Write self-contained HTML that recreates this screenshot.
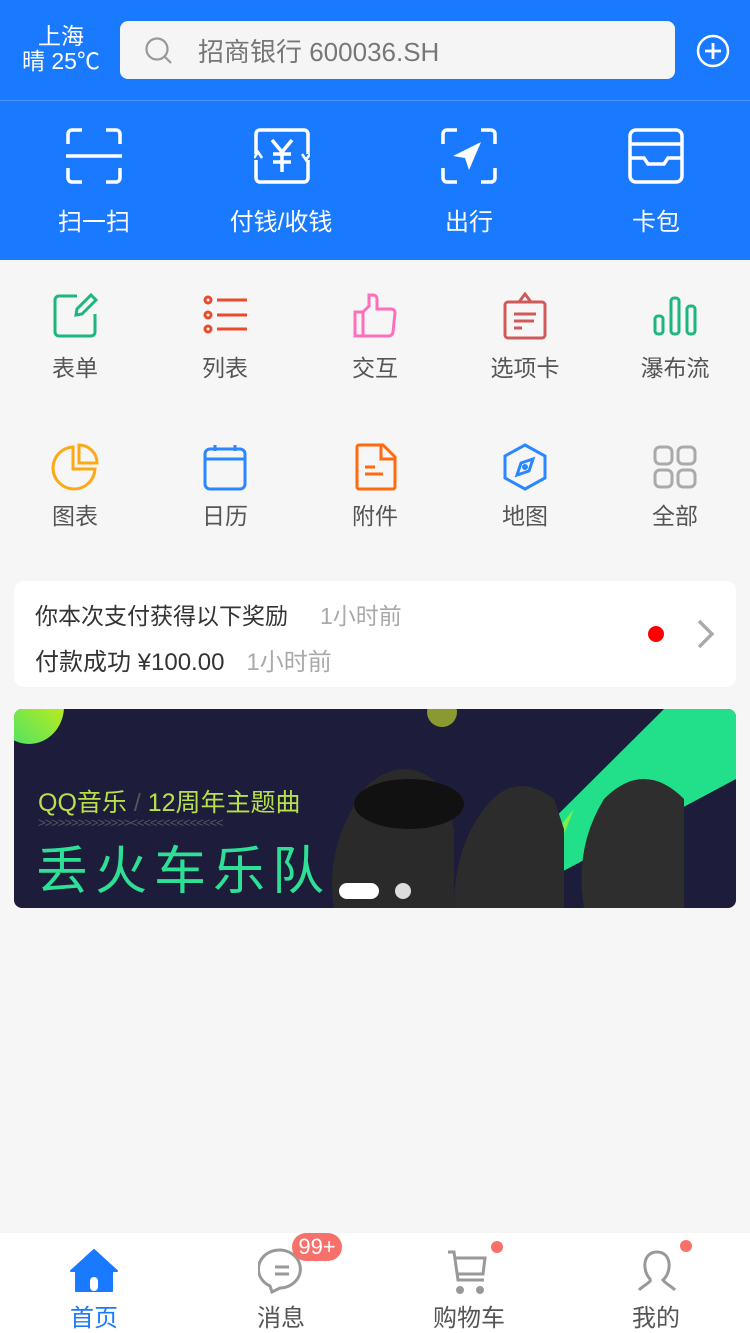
<!DOCTYPE html>
<html><head><meta charset="utf-8"><style>
*{margin:0;padding:0;box-sizing:border-box}
body{width:750px;height:1333px;background:#f6f6f6;font-family:"Liberation Sans","Noto Sans CJK SC",sans-serif;position:relative;overflow:hidden}
.hd{position:absolute;left:0;top:0;width:750px;height:260px;background:#1a7aff}
.line{position:absolute;left:0;top:100px;width:750px;height:1px;background:#4a95ff}
.city{position:absolute;left:14px;top:24px;width:94px;color:#fff;text-align:center;font-size:23px;line-height:25px}
.search{position:absolute;left:120px;top:21px;width:555px;height:58px;background:#f5f5f5;border-radius:8px}
.search span{position:absolute;left:78px;top:11px;font-size:26px;color:#777}
.qi{position:absolute;top:128px;width:56px;height:56px}
.ql{position:absolute;top:202px;color:#fff;font-size:24px;width:188px;text-align:center}
.gi{position:absolute;width:48px;height:48px}
.gl{position:absolute;width:150px;text-align:center;font-size:23px;color:#555}
.card{position:absolute;left:14px;top:581px;width:722px;height:106px;background:#fff;border-radius:10px}
.banner{position:absolute;left:14px;top:709px;width:722px;height:199px;border-radius:8px;overflow:hidden;background:#1d1d3b}
.tab{position:absolute;left:0;top:1233px;width:750px;height:100px;background:#fff}
.tl{position:absolute;top:1298px;width:188px;text-align:center;font-size:24px;color:#555}
</style></head><body>
<div class="hd"></div><div class="line"></div>
<div class="city">上海<br>晴 25℃</div>
<div class="search">
<svg style="position:absolute;left:24px;top:15px" width="30" height="30" viewBox="0 0 30 30"><circle cx="13" cy="13" r="10.5" fill="none" stroke="#999" stroke-width="2.2"/><path d="M21 21l6 6" stroke="#999" stroke-width="2.2"/></svg>
<span>招商银行 600036.SH</span></div>
<svg style="position:absolute;left:696px;top:34px" width="34" height="34" viewBox="0 0 34 34"><circle cx="17" cy="17" r="15" fill="none" stroke="#fff" stroke-width="2.5"/><path d="M17 9v16M9 17h16" stroke="#fff" stroke-width="2.8"/></svg>

<svg class="qi" style="left:66px" viewBox="0 0 56 56" fill="none" stroke="#fff" stroke-width="3.5"><path d="M2 16V6a4 4 0 0 1 4-4h10M40 2h10a4 4 0 0 1 4 4v10M54 40v10a4 4 0 0 1-4 4H40M16 54H6a4 4 0 0 1-4-4V40M0 28h56"/></svg>
<svg class="qi" style="left:254px" viewBox="0 0 56 56" fill="none" stroke="#fff" stroke-width="3.5"><path d="M2 26V6a4 4 0 0 1 4-4h44a4 4 0 0 1 4 4v20M54 32v18a4 4 0 0 1-4 4H6a4 4 0 0 1-4-4V32M18 12l10 12 10-12M28 24v20M19 26h18M19 34h18"/><path d="M0 30l4 -6 4 6M48 26l4 6 4-6" stroke-width="2.5"/></svg>
<svg class="qi" style="left:441px" viewBox="0 0 56 56" fill="none" stroke="#fff" stroke-width="3.5"><path d="M2 16V6a4 4 0 0 1 4-4h10M40 2h10a4 4 0 0 1 4 4v10M54 40v10a4 4 0 0 1-4 4H40M16 54H6a4 4 0 0 1-4-4V40"/><path d="M40 14L12 28l12 2 4 12z" fill="#fff" stroke="none"/></svg>
<svg class="qi" style="left:628px" viewBox="0 0 56 56" fill="none" stroke="#fff" stroke-width="3.5"><rect x="2" y="2" width="52" height="52" rx="6"/><path d="M2 16h52M2 30h14l4 6h16l4-6h14"/></svg>
<div class="ql" style="left:0">扫一扫</div><div class="ql" style="left:187px">付钱/收钱</div><div class="ql" style="left:375px">出行</div><div class="ql" style="left:562px">卡包</div>

<svg class="gi" style="left:51px;top:292px" viewBox="0 0 48 48" fill="none" stroke="#1cb77c" stroke-width="3"><path d="M26 4H8a4 4 0 0 0-4 4v32a4 4 0 0 0 4 4h32a4 4 0 0 0 4-4V22"/><path d="M40 3l5 5-14 14-6 1 1-6z"/></svg>
<svg class="gi" style="left:201px;top:292px" viewBox="0 0 48 48" fill="none" stroke="#ea4a2b" stroke-width="3"><circle cx="7" cy="8" r="3"/><circle cx="7" cy="23" r="3"/><circle cx="7" cy="37" r="3"/><path d="M16 8h30M16 23h30M16 37h30"/></svg>
<svg class="gi" style="left:351px;top:292px" viewBox="0 0 48 48" fill="none" stroke="#fd6ebb" stroke-width="3"><path d="M4 20h8v24H4zM12 20l6-6V3h4c4 0 4 4 4 4v10h14c3 0 4 2 4 4l-2 19c0 2-2 4-4 4H12"/></svg>
<svg class="gi" style="left:501px;top:292px" viewBox="0 0 48 48" fill="none" stroke="#d05a5a" stroke-width="3"><path d="M18 10l6-8 6 8"/><rect x="4" y="10" width="40" height="36" rx="3"/><path d="M13 22h22M13 29h20M13 36h8"/></svg>
<svg class="gi" style="left:651px;top:292px" viewBox="0 0 48 48" fill="none" stroke="#1cb77c" stroke-width="3"><rect x="4" y="24" width="8" height="18" rx="3"/><rect x="20" y="6" width="8" height="36" rx="3"/><rect x="36" y="14" width="8" height="28" rx="3"/></svg>
<div class="gl" style="left:0;top:349px">表单</div><div class="gl" style="left:150px;top:349px">列表</div><div class="gl" style="left:300px;top:349px">交互</div><div class="gl" style="left:450px;top:349px">选项卡</div><div class="gl" style="left:600px;top:349px">瀑布流</div>

<svg class="gi" style="left:51px;top:443px" viewBox="0 0 48 48" fill="none" stroke="#fda916" stroke-width="3"><path d="M22 4a21 21 0 1 0 22 22H22z"/><path d="M28 2v18h18A18 18 0 0 0 28 2z"/></svg>
<svg class="gi" style="left:201px;top:443px" viewBox="0 0 48 48" fill="none" stroke="#2a87ff" stroke-width="3"><rect x="4" y="6" width="40" height="40" rx="5"/><path d="M4 16h40M14 2v6M34 2v6"/></svg>
<svg class="gi" style="left:351px;top:443px" viewBox="0 0 48 48" fill="none" stroke="#ff6a10" stroke-width="3"><path d="M8 2h24l12 12v30a2 2 0 0 1-2 2H8a2 2 0 0 1-2-2V4a2 2 0 0 1 2-2zM30 2v14h14M14 24h10M14 31h18"/></svg>
<svg class="gi" style="left:501px;top:443px" viewBox="0 0 48 48" fill="none" stroke="#2a87ff" stroke-width="3"><path d="M24 2l20 11v22L24 46 4 35V13z"/><path d="M32 16l-4 12-12 4 4-12z"/><circle cx="24" cy="24" r="1.5" fill="#2a87ff"/></svg>
<svg class="gi" style="left:651px;top:443px" viewBox="0 0 48 48" fill="none" stroke="#aaa" stroke-width="3"><rect x="4" y="4" width="17" height="17" rx="5"/><rect x="27" y="4" width="17" height="17" rx="5"/><rect x="4" y="27" width="17" height="17" rx="5"/><rect x="27" y="27" width="17" height="17" rx="5"/></svg>
<div class="gl" style="left:0;top:497px">图表</div><div class="gl" style="left:150px;top:497px">日历</div><div class="gl" style="left:300px;top:497px">附件</div><div class="gl" style="left:450px;top:497px">地图</div><div class="gl" style="left:600px;top:497px">全部</div>

<div class="card">
<div style="position:absolute;left:21px;top:16px;font-size:23px;color:#333">你本次支付获得以下奖励<span style="color:#aaa;margin-left:32px">1小时前</span></div>
<div style="position:absolute;left:21px;top:61px;font-size:24px;color:#333">付款成功 ¥100.00<span style="color:#aaa;margin-left:22px">1小时前</span></div>
<div style="position:absolute;left:634px;top:45px;width:16px;height:16px;border-radius:50%;background:#f00"></div>
<svg style="position:absolute;left:682px;top:38px" width="20" height="30" viewBox="0 0 20 30"><path d="M3 2l13 13L3 28" fill="none" stroke="#aaa" stroke-width="3.5"/></svg>
</div>

<div class="banner">
<div style="position:absolute;left:-20px;top:-40px;width:70px;height:75px;border-radius:50%;background:linear-gradient(45deg,#3de072,#e6f000)"></div>
<div style="position:absolute;left:413px;top:-12px;width:30px;height:30px;border-radius:50%;background:#8a9a30"></div>
<svg style="position:absolute;left:0;top:0" width="722" height="199"><polygon points="650,0 722,0 722,70 480,199 450,199" fill="#22e08a"/><polygon points="560,100 480,199 520,199" fill="#7ef04a"/>
<path d="M350 80 q40-40 80 0 l10 40 v79 h-120 q-10-60 30-119z" fill="#2a2a2a"/><path d="M470 100 q30-40 70-10 l10 30 v79 h-110 q0-60 30-99z" fill="#2c2c2c"/><path d="M590 90 q40-40 80 0 v109 h-100 q-10-60 20-109z" fill="#2e2e2e"/>
<ellipse cx="395" cy="95" rx="55" ry="25" fill="#111"/></svg>
<div style="position:absolute;left:24px;top:74px;font-size:25px;color:#b8e04a">QQ音乐 <span style="color:#555">/</span> 12周年主题曲</div>
<div style="position:absolute;left:24px;top:106px;font-size:13px;color:#556;letter-spacing:-1px">&gt;&gt;&gt;&gt;&gt;&gt;&gt;&gt;&gt;&gt;&gt;&gt;&gt;&gt;&lt;&lt;&lt;&lt;&lt;&lt;&lt;&lt;&lt;&lt;&lt;&lt;&lt;&lt;</div>
<div style="position:absolute;left:22px;top:120px;font-size:52px;color:#2ee095;letter-spacing:7px">丢火车乐队</div>
<div style="position:absolute;left:325px;top:174px;width:40px;height:16px;border-radius:8px;background:#fff"></div>
<div style="position:absolute;left:381px;top:174px;width:16px;height:16px;border-radius:50%;background:#ddd"></div>
</div>

<div class="tab"></div>
<svg style="position:absolute;left:70px;top:1249px" width="48" height="44" viewBox="0 0 48 44"><path d="M24 1L1 22h5v20h36V22h5z" fill="#1a7aff" stroke="#1a7aff" stroke-width="2" stroke-linejoin="round"/><rect x="20" y="28" width="8" height="14" rx="4" fill="#fff"/></svg>
<svg style="position:absolute;left:258px;top:1248px" width="48" height="46" viewBox="0 0 48 46" fill="none" stroke="#999" stroke-width="3"><path d="M12 38A21 19 0 1 1 22 40l-8 4z"/><path d="M17 19h14M17 26h14"/></svg>
<div style="position:absolute;left:292px;top:1233px;width:50px;height:28px;border-radius:14px;background:#f7706a;color:#fff;font-size:22px;text-align:center;line-height:28px">99+</div>
<svg style="position:absolute;left:446px;top:1250px" width="48" height="44" viewBox="0 0 48 44" fill="none" stroke="#999" stroke-width="3"><path d="M2 2h6l4 28h26M9 8h30l-2 16H12"/><circle cx="14" cy="40" r="2.5" fill="#999"/><circle cx="34" cy="40" r="2.5" fill="#999"/></svg>
<div style="position:absolute;left:491px;top:1241px;width:12px;height:12px;border-radius:50%;background:#f7706a"></div>
<svg style="position:absolute;left:636px;top:1250px" width="42" height="44" viewBox="0 0 42 44" fill="none" stroke="#999" stroke-width="3"><path d="M15 30C6 22 6 2 21 2s15 20 6 28c3 4 8 6 12 10M15 30c-3 4-8 6-12 10"/></svg>
<div style="position:absolute;left:680px;top:1240px;width:12px;height:12px;border-radius:50%;background:#f7706a"></div>
<div class="tl" style="left:0;color:#1a7aff">首页</div><div class="tl" style="left:187px">消息</div><div class="tl" style="left:375px">购物车</div><div class="tl" style="left:562px">我的</div>
</body></html>
